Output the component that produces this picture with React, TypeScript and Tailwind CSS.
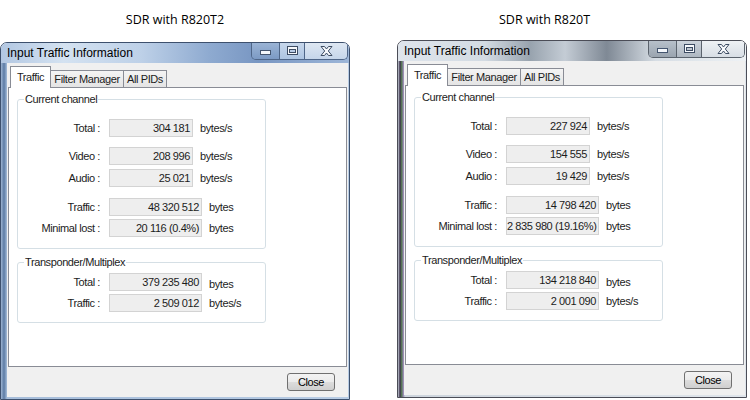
import React from "react";

type Row = { label: string; value: string; unit: string; wide?: boolean; gap: string; low?: boolean };

type WinData = {
  current: Row[];
  trans: Row[];
  glass: "blue" | "smoke";
};

const body =
  "font-['Liberation_Sans',Arial,sans-serif] text-[11px] tracking-[-0.4px] whitespace-nowrap text-[#1c1c1c]";

const left: WinData = {
  glass: "blue",
  current: [
    { label: "Total :", value: "304 181", unit: "bytes/s", gap: "mt-0" },
    { label: "Video :", value: "208 996", unit: "bytes/s", gap: "mt-[10px]" },
    { label: "Audio :", value: "25 021", unit: "bytes/s", gap: "mt-[4px]" },
    { label: "Traffic :", value: "48 320 512", unit: "bytes", wide: true, gap: "mt-[11px]" },
    { label: "Minimal lost :", value: "20 116 (0.4%)", unit: "bytes", wide: true, gap: "mt-[3px]" },
  ],
  trans: [
    { label: "Total :", value: "379 235 480", unit: "bytes", wide: true, gap: "mt-0", low: true },
    { label: "Traffic :", value: "2 509 012", unit: "bytes/s", wide: true, gap: "mt-[3px]" },
  ],
};

const right: WinData = {
  glass: "smoke",
  current: [
    { label: "Total :", value: "227 924", unit: "bytes/s", gap: "mt-0" },
    { label: "Video :", value: "154 555", unit: "bytes/s", gap: "mt-[10px]" },
    { label: "Audio :", value: "19 429", unit: "bytes/s", gap: "mt-[4px]" },
    { label: "Traffic :", value: "14 798 420", unit: "bytes", wide: true, gap: "mt-[11px]" },
    { label: "Minimal lost :", value: "2 835 980 (19.16%)", unit: "bytes", wide: true, gap: "mt-[3px]" },
  ],
  trans: [
    { label: "Total :", value: "134 218 840", unit: "bytes", wide: true, gap: "mt-0", low: true },
    { label: "Traffic :", value: "2 001 090", unit: "bytes/s", wide: true, gap: "mt-[3px]" },
  ],
};

function ValueRow({ row }: { row: Row }) {
  return (
    <div className={`flex h-[18px] items-center ${row.gap}`}>
      <div className="w-[82px] text-right">{row.label}</div>
      <div
        className={`ml-[9px] h-[18px] border border-[#d3d3d3] bg-[#eeeeee] pr-[2px] text-right leading-[16px] ${
          row.wide ? "w-[93px]" : "w-[84px]"
        }`}
      >
        {row.value}
      </div>
      <div className={`ml-[7px] ${row.low ? "mt-[5px]" : ""}`}>{row.unit}</div>
    </div>
  );
}

function Group({ title, rows, top, pad, bottom }: { title: string; rows: Row[]; top: string; pad: string; bottom: string }) {
  return (
    <fieldset className={`w-[249px] rounded-[3px] border border-[#d5dfe5] ${top} ${bottom}`}>
      <legend className="ml-[6px] px-[1px] leading-[14px]">{title}</legend>
      <div className={pad}>
        {rows.map((r) => (
          <ValueRow key={r.label + r.value} row={r} />
        ))}
      </div>
    </fieldset>
  );
}

function CaptionButtons({ glass }: { glass: "blue" | "smoke" }) {
  const blue = glass === "blue";
  return (
    <div
      className={`-mt-px flex h-[18px] overflow-hidden rounded-b-[5px] border border-t-0 ${
        blue ? "border-[#4f6688]" : "border-[#5b636d]"
      }`}
    >
      <div
        className={`flex w-[27px] items-end justify-center pb-[4px] ${
          blue ? "bg-[linear-gradient(#9cb5d6,#7c9ac4)]" : "bg-[linear-gradient(#b9c2cc,#9aa4af)]"
        }`}
      >
        <svg width="11" height="5" viewBox="0 0 11 5">
          <rect x="0.5" y="0.5" width="10" height="4" fill="#f4f7fb" stroke="#44556f" />
        </svg>
      </div>
      <div
        className={`flex w-[25px] items-center justify-center border-l ${
          blue ? "border-[#4f6688] bg-[linear-gradient(#c8d8ec,#aec5e2)]" : "border-[#5b636d] bg-[linear-gradient(#cfd6de,#aeb7c1)]"
        }`}
      >
        <svg width="11" height="9" viewBox="0 0 11 9">
          <rect x="0.5" y="0.5" width="10" height="8" fill="#f7f9fc" stroke="#3d4c63" />
          <rect x="2.5" y="3.5" width="6" height="3" fill={blue ? "#b9cce6" : "#bfc7d0"} stroke="#3d4c63" />
        </svg>
      </div>
      <div
        className={`flex w-[43px] items-center justify-center border-l ${
          blue ? "border-[#4f6688] bg-[linear-gradient(#dfe8f3,#c6d6ea)]" : "border-[#5b636d] bg-[linear-gradient(#f0f3f6,#d8dee5)]"
        }`}
      >
        <svg width="13" height="10" viewBox="0 0 13 10">
          <polygon
            points="1,0.5 4.5,0.5 6.5,3 8.5,0.5 12,0.5 8.3,5 12,9.5 8.5,9.5 6.5,7 4.5,9.5 1,9.5 4.7,5"
            fill="#f7f9fc"
            stroke="#3d4c63"
          />
        </svg>
      </div>
    </div>
  );
}

function Window({ data }: { data: WinData }) {
  const blue = data.glass === "blue";
  return (
    <div
      className={`flex h-[358px] w-[350px] flex-col overflow-hidden rounded-t-[7px] border ${
        blue ? "border-[#3d506d]" : "border-[#4b4d57]"
      }`}
    >
      <div
        className={`flex h-[20px] items-start justify-between pl-[6px] pr-[1px] ${
          blue
            ? "bg-[linear-gradient(90deg,#b2c7e2_0%,#d4e2f1_18%,#bed1e8_40%,#8eaad0_60%,#7896c2_74%,#9db6d8_100%)]"
            : "bg-[linear-gradient(90deg,#dfe5ec_0%,#d3dbe3_25%,#98a3ae_38%,#c4ccd5_48%,#7f8995_60%,#d6dde4_74%,#eef2f5_100%)]"
        }`}
      >
        <span className="mt-[2px] font-['Liberation_Sans',Arial,sans-serif] text-[12px] leading-[17px] text-black">
          Input Traffic Information
        </span>
        <CaptionButtons glass={data.glass} />
      </div>
      <div
        className={`flex flex-1 flex-col pb-[2px] pl-[6px] pr-[1px] ${
          blue
            ? "bg-[linear-gradient(90deg,#9db4d2_0px,#5c7ba4_3px,#a6bdda_6px,#b8cce4_100%)]"
            : "bg-[linear-gradient(90deg,#c6ced8_0px,#3b2f4a_2px,#5f8a5a_4px,#8c78a8_5px,#cdd4dc_7px,#dfe5eb_100%)]"
        }`}
      >
        <div className={`flex flex-1 flex-col bg-[#f0f0f0] px-[1px] pt-[3px] ${body}`}>
          <div className="flex h-[21px] items-end pl-[2px]">
            <div className="relative z-10 -mb-px flex h-[22px] w-[41px] items-center justify-center border border-b-0 border-[#898c95] bg-white">
              Traffic
            </div>
            <div className="-ml-px flex h-[17px] w-[74px] items-center justify-center border border-b-0 border-[#898c95] bg-[linear-gradient(#f4f4f4,#e4e4e4)]">
              Filter Manager
            </div>
            <div className="-ml-px flex h-[17px] w-[44px] items-center justify-center border border-b-0 border-[#898c95] bg-[linear-gradient(#f4f4f4,#e4e4e4)]">
              All PIDs
            </div>
          </div>
          <div className="h-[280px] border border-[#898c95] bg-white pl-[8px]">
            <Group title="Current channel" rows={data.current} top="mt-[4px]" pad="pt-[13px]" bottom="pb-[11px]" />
            <Group title="Transponder/Multiplex" rows={data.trans} top="mt-[6px]" pad="pt-[4px]" bottom="pb-[10px]" />
          </div>
          <div className="flex flex-1 items-center justify-end pr-[12px]">
            <button className="h-[18px] w-[48px] rounded-[3px] border border-[#707070] bg-[linear-gradient(#f3f3f3_0%,#ebebeb_50%,#dddddd_50%,#cfcfcf_100%)] leading-[16px] text-black">
              Close
            </button>
          </div>
        </div>
      </div>
    </div>
  );
}

export default function App() {
  return (
    <div className="flex h-[400px] w-[750px] overflow-hidden bg-white">
      <div className="w-[350px] shrink-0">
        <div className="h-[42px] pt-[10px] text-center font-['Open_Sans',sans-serif] text-[12.5px] leading-[20px] text-black">
          SDR with R820T2
        </div>
        <Window data={left} />
      </div>
      <div className="ml-[47px] w-[350px] shrink-0">
        <div className="h-[40px] pl-[102px] pt-[10px] font-['Open_Sans',sans-serif] text-[12.5px] leading-[20px] text-black">
          SDR with R820T
        </div>
        <Window data={right} />
      </div>
    </div>
  );
}
